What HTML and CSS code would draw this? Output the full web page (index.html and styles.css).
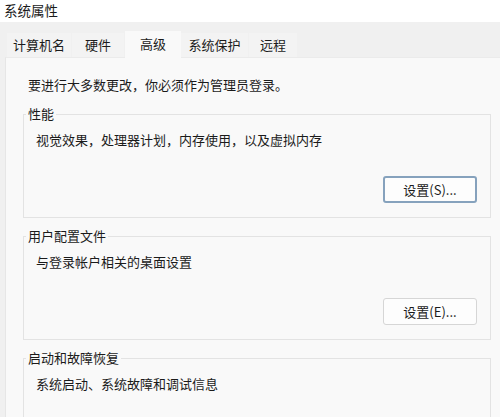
FILE: index.html
```html
<!DOCTYPE html>
<html lang="zh-CN">
<head>
    <meta charset="UTF-8">
    <meta name="viewport" content="width=device-width, initial-scale=1.0">
    <title>系统属性</title>
    <link rel="stylesheet" href="styles.css">
</head>
<body>
    <div class="titlebar">系统属性</div>

    <div class="tabs">
        <div class="tab tab-name">计算机名</div>
        <div class="tab tab-hw">硬件</div>
        <div class="tab tab-adv active">高级</div>
        <div class="tab tab-prot">系统保护</div>
        <div class="tab tab-remote">远程</div>
    </div>

    <div class="panel">
        <p class="note">要进行大多数更改，你必须作为管理员登录。</p>

        <!-- 性能 -->
        <fieldset class="group">
            <legend>性能</legend>
            <p class="desc">视觉效果，处理器计划，内存使用，以及虚拟内存</p>
            <div class="actions">
                <button class="btn default">设置(S)...</button>
            </div>
        </fieldset>

        <!-- 用户配置文件 -->
        <fieldset class="group">
            <legend>用户配置文件</legend>
            <p class="desc">与登录帐户相关的桌面设置</p>
            <div class="actions">
                <button class="btn">设置(E)...</button>
            </div>
        </fieldset>

        <!-- 启动和故障恢复 -->
        <fieldset class="group last">
            <legend>启动和故障恢复</legend>
            <p class="desc">系统启动、系统故障和调试信息</p>
        </fieldset>
    </div>
</body>
</html>
```

FILE: styles.css
```css
* {
    box-sizing: border-box;
    margin: 0;
    padding: 0;
}

html, body {
    height: 100%;
}

body {
    display: flex;
    flex-direction: column;
    background-color: #f0f0f0;
    color: #1b1b1b;
    font-family: "Noto Sans CJK SC", "Noto Sans", sans-serif;
    font-size: 13px;
    line-height: 16px;
    overflow: hidden;
}

.titlebar {
    height: 22px;
    padding: 1px 0 0 4px;
    background-color: #fff;
    font-size: 13.5px;
    line-height: 18px;
}

.tabs {
    display: flex;
    align-items: flex-end;
    height: 35px;
    padding-left: 7px;
}

.tab {
    height: 24px;
    line-height: 24px;
    text-align: center;
    background-color: #f3f3f3;
}

.tab.active {
    height: 27px;
    line-height: 25px;
    margin-bottom: -1px;
    background-color: #f9f9f9;
    position: relative;
}

.tab-name { width: 64px; }
.tab-hw { width: 52px; margin-left: 1px; }
.tab-adv { width: 56px; margin-left: 1px; }
.tab-prot { width: 67px; }
.tab-remote { width: 48px; margin-left: 1px; }

.panel {
    flex: 1;
    min-height: 0;
    overflow: hidden;
    margin-left: 5px;
    padding: 19px 9px 0 17px;
    background-color: #f9f9f9;
    border-left: 1px solid #e6e6e6;
    border-top: 1px solid #ebebeb;
}

.note {
    margin-left: 5px;
}

.group {
    margin-top: 10px;
    padding: 10px 13px 14px 12px;
    border: 1px solid #e3e3e3;
}

.note + .group {
    margin-top: 13px;
}

.group.last {
    padding-bottom: 40px;
}

.group legend {
    margin-left: -10px;
    padding: 0 2px;
}

.actions {
    display: flex;
    justify-content: flex-end;
    margin-top: 28px;
}

.btn {
    width: 94px;
    height: 27px;
    font-family: inherit;
    font-size: 13px;
    color: #1b1b1b;
    background-color: #fdfdfd;
    border: 1px solid #d6d6d6;
    border-radius: 3px;
}

.btn.default {
    border: 2px solid #86a2bd;
}
```
